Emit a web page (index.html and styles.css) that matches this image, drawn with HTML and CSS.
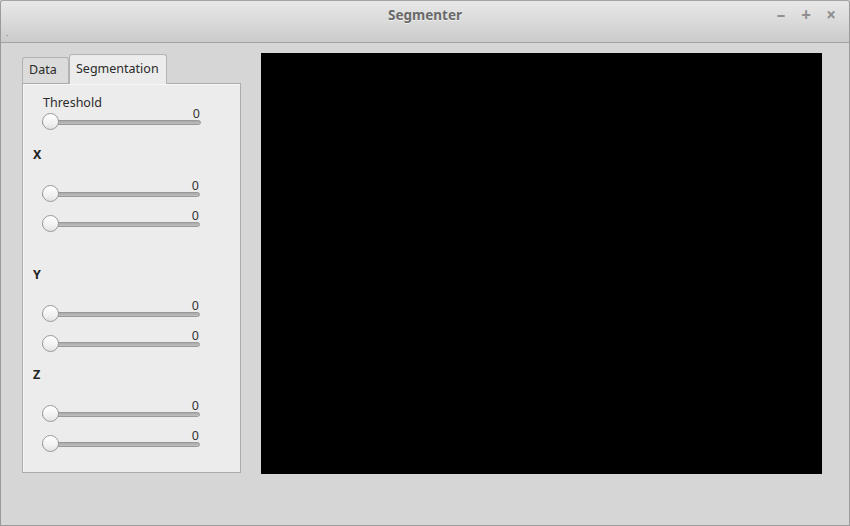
FILE: index.html
```html
<!DOCTYPE html>
<html lang="en">
<head>
<meta charset="utf-8">
<title>Segmenter</title>
<link rel="stylesheet" href="styles.css">
</head>
<body>
<div class="window">
  <header class="titlebar">
    <span class="grip">.</span>
    <h1 class="title">Segmenter</h1>
    <div class="controls">
      <span class="ctl">&#8211;</span>
      <span class="ctl">+</span>
      <span class="ctl">&#215;</span>
    </div>
  </header>
  <main class="content">
    <section class="tabwidget">
      <nav class="tabbar">
        <div class="tab">Data</div>
        <div class="tab active">Segmentation</div>
      </nav>
      <div class="panel">
        <div class="threshold">
          <div class="label">Threshold</div>
          <div class="slider wide">
            <div class="value">0</div>
            <div class="track"><span class="thumb"></span></div>
          </div>
        </div>
        <div class="group group-x">
          <h2 class="axis">X</h2>
          <div class="sliders">
            <div class="slider"><div class="value">0</div><div class="track"><span class="thumb"></span></div></div>
            <div class="slider"><div class="value">0</div><div class="track"><span class="thumb"></span></div></div>
          </div>
        </div>
        <div class="group group-y">
          <h2 class="axis">Y</h2>
          <div class="sliders">
            <div class="slider"><div class="value">0</div><div class="track"><span class="thumb"></span></div></div>
            <div class="slider"><div class="value">0</div><div class="track"><span class="thumb"></span></div></div>
          </div>
        </div>
        <div class="group group-z">
          <h2 class="axis">Z</h2>
          <div class="sliders">
            <div class="slider"><div class="value">0</div><div class="track"><span class="thumb"></span></div></div>
            <div class="slider"><div class="value">0</div><div class="track"><span class="thumb"></span></div></div>
          </div>
        </div>
      </div>
    </section>
    <div class="viewport"></div>
  </main>
</div>
</body>
</html>
```

FILE: styles.css
```css
* { box-sizing: border-box; }
html, body { margin: 0; padding: 0; }
body {
  width: 850px;
  height: 526px;
  overflow: hidden;
  background: #d6d6d6;
  font-family: "Noto Sans", "DejaVu Sans", sans-serif;
  font-size: 12.5px;
  color: #2b2b2b;
}
.window {
  width: 850px;
  height: 526px;
  border: 1px solid #9a9a9a;
  border-top-color: #a4a4a4;
  border-radius: 3px 3px 0 0;
  display: flex;
  flex-direction: column;
  background: #d6d6d6;
}
.titlebar {
  height: 42px;
  flex: none;
  display: grid;
  grid-template-columns: 1fr auto 1fr;
  align-items: start;
  background: linear-gradient(#e8e8e8, #dadada 50%, #cbcbcb);
  border-bottom: 1px solid #a2a2a2;
  border-radius: 3px 3px 0 0;
}
.grip {
  align-self: end;
  padding-left: 5px;
  font-size: 9px;
  line-height: 9px;
  color: #7a7a7a;
  margin-bottom: 5px;
}
.title {
  margin: 0;
  padding-top: 5px;
  font-size: 13.5px;
  line-height: 18px;
  font-weight: bold;
  color: #6a6a6a;
  text-shadow: 0 1px 0 rgba(255,255,255,0.6);
}
.controls {
  justify-self: end;
  display: flex;
  gap: 9px;
  padding-top: 3px;
  padding-right: 10px;
}
.ctl {
  width: 16px;
  text-align: center;
  font-size: 17px;
  line-height: 22px;
  font-weight: bold;
  color: #8e8e8e;
}
.content {
  flex: 1;
  display: flex;
  align-items: flex-start;
  gap: 20px;
  padding: 10px 0 0 21px;
}
.tabwidget {
  width: 219px;
  display: flex;
  flex-direction: column;
  margin-top: 1px;
}
.tabbar {
  display: flex;
  align-items: flex-end;
  gap: 0;
  height: 29px;
  position: relative;
  z-index: 1;
}
.tab {
  height: 26px;
  padding: 5px 0 0 6px;
  width: 47px;
  border: 1px solid #b3b3b3;
  border-bottom: none;
  border-radius: 3px 3px 0 0;
  background: #dbdbdb;
  line-height: 14px;
  color: #2b2b2b;
}
.tab.active {
  width: 98px;
  height: 30px;
  margin-bottom: -1px;
  padding: 7px 0 0 6px;
  background: #ececec;
}
.panel {
  height: 390px;
  background: #ececec;
  border: 1px solid #acacac;
  box-shadow: inset 1px 1px 0 #f7f7f7;
}
.threshold {
  padding: 12px 0 0 20px;
}
.label {
  line-height: 14px;
}
.slider {
  width: 158px;
  display: flex;
  flex-direction: column;
}
.slider.wide { width: 159px; margin-top: -3px; }
.threshold .slider { margin-left: -1px; }
.value {
  text-align: right;
  font-size: 12.5px;
  line-height: 12px;
  padding-top: 1px;
  padding-right: 1px;
  color: #333;
}
.track {
  position: relative;
  height: 5px;
  margin-top: 0;
  border: 1px solid #999;
  border-radius: 3px;
  background: linear-gradient(#a9a9a9, #c0c0c0);
}
.thumb {
  position: absolute;
  left: -1px;
  top: -8px;
  width: 17px;
  height: 17px;
  border-radius: 50%;
  border: 1px solid #9a9a9a;
  background: linear-gradient(#ffffff, #f2f2f2 60%, #e2e2e2);
}
.group {
  padding-left: 10px;
}
.axis {
  margin: 0;
  font-size: 12.5px;
  line-height: 16px;
  font-weight: bold;
  color: #222;
}
.sliders {
  display: flex;
  flex-direction: column;
  gap: 12px;
  padding-left: 9px;
  margin-top: 16px;
}
.group-x { margin-top: 22px; }
.group-y { margin-top: 40px; }
.group-z { margin-top: 20px; }
.viewport {
  width: 561px;
  height: 421px;
  background: #000;
}
```
